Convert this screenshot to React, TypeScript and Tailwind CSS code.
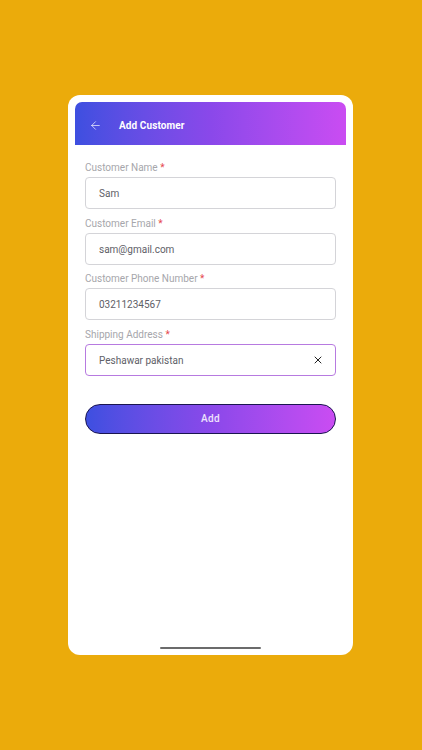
import { ArrowLeft, X } from 'lucide-react';

const fields = [
    { label: 'Customer Name', value: 'Sam' },
    { label: 'Customer Email', value: 'sam@gmail.com' },
    { label: 'Customer Phone Number', value: '03211234567' },
    { label: 'Shipping Address', value: 'Peshawar pakistan', active: true },
];

export default function App() {
    return (
        <div className="min-h-[750px] w-full bg-[#ebab0b] flex pl-[68px] pt-[95px] font-['Roboto',sans-serif]">
            <div className="w-[285px] h-[560px] bg-white rounded-[12px] p-[7px] flex flex-col">
                {/* Header */}
                <div className="h-[43px] rounded-t-[7px] bg-gradient-to-r from-[#3d4fe0] via-[#8a48ea] to-[#ca4cf2] flex items-center pl-[14px] pt-[4px]">
                    <ArrowLeft className="h-[13px] w-[13px] text-white" strokeWidth={1.25} />
                    <span className="ml-[17px] text-[10px] font-bold tracking-[0.1px] text-white">Add Customer</span>
                </div>

                {/* Form */}
                <div className="px-[10px] pt-[16px] flex flex-col gap-[7.5px]">
                    {fields.map((f) => (
                        <div key={f.label} className="flex flex-col gap-[3px]">
                            <label className="text-[10px] leading-[13px] text-[#a6a6ab]">
                                {f.label} <span className="text-[#e5484d]">*</span>
                            </label>
                            <div
                                className={
                                    'h-[32px] rounded-[4px] border flex items-center pl-[13px] pr-[11px] pt-[1px] ' +
                                    (f.active ? 'border-[#b77ae0]' : 'border-[#d4d4d8]')
                                }
                            >
                                <span className="flex-1 text-[10px] text-[#606067]">{f.value}</span>
                                {f.active && <X className="h-[12px] w-[12px] text-[#222]" strokeWidth={2} />}
                            </div>
                        </div>
                    ))}

                    <button className="mt-[20.5px] h-[30px] rounded-full border border-[#1a1550] bg-gradient-to-r from-[#3d4fe0] via-[#8a48ea] to-[#ca4cf2] text-[10px] font-medium tracking-[0.3px] text-white/85">
                        Add
                    </button>
                </div>

                {/* Home indicator */}
                <div className="mt-auto flex justify-center -mb-[1px]">
                    <div className="h-[2px] w-[101px] rounded-full bg-[#6b6b6b]" />
                </div>
            </div>
        </div>
    );
}
